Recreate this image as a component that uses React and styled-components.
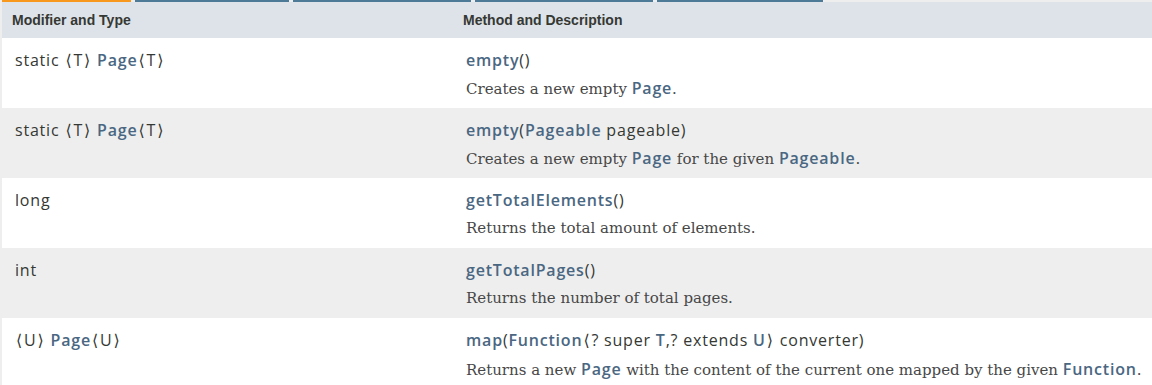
import React from 'react';
import styled, { createGlobalStyle } from 'styled-components';

var GlobalStyle = createGlobalStyle`
  body {
    margin: 0;
    background: #ffffff;
  }
`;

var tabs = [
  { width: 129, active: true },
  { width: 154 },
  { width: 178 },
  { width: 178 },
  { width: 166 },
];

var L = '⟨';
var R = '⟩';

var rows = [
  {
    type: ['static ', { br: L }, 'T', { br: R }, ' ', { link: 'Page' }, { br: L }, 'T', { br: R }],
    method: [{ link: 'empty' }, '()'],
    desc: ['Creates a new empty ', { link: 'Page' }, '.'],
  },
  {
    type: ['static ', { br: L }, 'T', { br: R }, ' ', { link: 'Page' }, { br: L }, 'T', { br: R }],
    method: [{ link: 'empty' }, '(', { link: 'Pageable' }, ' pageable)'],
    desc: ['Creates a new empty ', { link: 'Page' }, ' for the given ', { link: 'Pageable' }, '.'],
  },
  {
    type: ['long'],
    method: [{ link: 'getTotalElements' }, '()'],
    desc: ['Returns the total amount of elements.'],
  },
  {
    type: ['int'],
    method: [{ link: 'getTotalPages' }, '()'],
    desc: ['Returns the number of total pages.'],
  },
  {
    type: [{ br: L }, 'U', { br: R }, ' ', { link: 'Page' }, { br: L }, 'U', { br: R }],
    method: [
      { link: 'map' }, '(', { link: 'Function' }, { br: L }, '? super ', { link: 'T' }, ',? extends ',
      { link: 'U' }, { br: R }, ' converter)',
    ],
    desc: ['Returns a new ', { link: 'Page' }, ' with the content of the current one mapped by the given ', { link: 'Function' }, '.'],
  },
];

var renderParts = (parts) =>
  parts.map((p, i) => {
    if (typeof p === 'string') return <span key={i}>{p}</span>;
    if (p.br) return <Bracket key={i}>{p.br}</Bracket>;
    return <Link key={i}>{p.link}</Link>;
  });

var App = () => {
  return (
    <Wrap>
      <GlobalStyle />
      <TabBar>
        {tabs.map((t, i) => (
          <Tab key={i} $active={t.active} style={{ width: t.width }} />
        ))}
      </TabBar>
      <Table>
        <HeadCell>Modifier and Type</HeadCell>
        <HeadCell>Method and Description</HeadCell>
        {rows.map((r, i) => (
          <React.Fragment key={i}>
            <TypeCell $alt={i % 2 === 1}>
              <Code>{renderParts(r.type)}</Code>
            </TypeCell>
            <MethodCell $alt={i % 2 === 1}>
              <Code>{renderParts(r.method)}</Code>
              <Desc>{renderParts(r.desc)}</Desc>
            </MethodCell>
          </React.Fragment>
        ))}
      </Table>
    </Wrap>
  );
};

var Wrap = styled.div`
  width: 1152px;
  background: #eeeeee;
`;

var TabBar = styled.div`
  display: flex;
  gap: 4px;
  height: 2px;
  padding-left: 2px;
`;

var Tab = styled.div`
  height: 2px;
  background: ${(p) => (p.$active ? '#f8981d' : '#4d7a97')};
`;

var Table = styled.div`
  display: grid;
  grid-template-columns: 451px 1fr;
  border-left: 2px solid #eeeeee;
`;

var HeadCell = styled.div`
  height: 36px;
  box-sizing: border-box;
  padding: 10px 10px 0;
  background: #dee3e9;
  color: #353833;
  font-family: 'Liberation Sans', Arial, sans-serif;
  font-weight: bold;
  font-size: 14px;
  line-height: 16px;
`;

var BodyCell = styled.div`
  height: 70px;
  box-sizing: border-box;
  padding: 12px 13px 0;
  background: ${(p) => (p.$alt ? '#eeeeee' : '#ffffff')};
`;

var TypeCell = styled(BodyCell)``;

var MethodCell = styled(BodyCell)`
  display: flex;
  flex-direction: column;
  gap: 8px;
`;

var Code = styled.div`
  font-family: 'Open Sans', sans-serif;
  font-size: 16px;
  letter-spacing: 0.8px;
  line-height: 20px;
  color: #353833;
  white-space: nowrap;
`;

var Bracket = styled.span`
  font-family: 'DejaVu Sans', sans-serif;
  font-size: 16px;
  margin: 0 1px;
`;

var Link = styled.span`
  color: #4a6782;
  font-family: 'Open Sans', sans-serif;
  font-weight: 600;
  letter-spacing: 0.8px;
`;

var Desc = styled.div`
  font-family: 'DejaVu Serif', Georgia, serif;
  font-size: 15px;
  line-height: 20px;
  color: #474747;
  white-space: nowrap;

  ${Link} {
    font-size: 16px;
  }
`;

export default App;
